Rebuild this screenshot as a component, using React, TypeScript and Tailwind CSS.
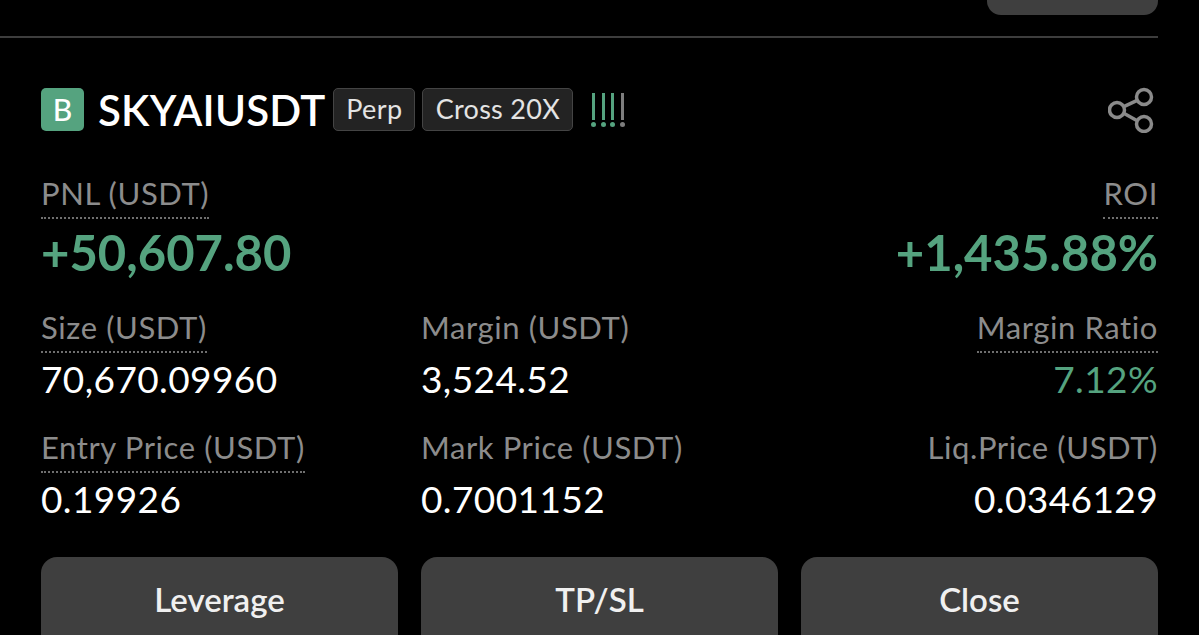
const GREEN = 'text-[#55a37f]';

type Field = { label: string; value: string; dotted?: boolean; valueClass?: string };

const rows: Field[][] = [
  [
    { label: 'Size (USDT)', value: '70,670.09960', dotted: true },
    { label: 'Margin (USDT)', value: '3,524.52' },
    { label: 'Margin Ratio', value: '7.12%', dotted: true, valueClass: GREEN },
  ],
  [
    { label: 'Entry Price (USDT)', value: '0.19926', dotted: true },
    { label: 'Mark Price (USDT)', value: '0.7001152' },
    { label: 'Liq.Price (USDT)', value: '0.0346129' },
  ],
];

function Label({ text, dotted }: { text: string; dotted?: boolean }) {
  return (
    <span
      className={`inline-block h-[47px] pt-[4px] text-[31px] leading-[34px] tracking-[0.6px] text-[#8c8c8c] ${
        dotted ? 'border-b-2 border-dotted border-[#6f6f6f]' : ''
      }`}
    >
      {text}
    </span>
  );
}

function ShareIcon() {
  return (
    <svg width="46" height="46" viewBox="0 0 46 46" fill="none" stroke="#8a8a8a" strokeWidth="3.5">
      <circle cx="36" cy="10" r="7.5" />
      <circle cx="9" cy="23" r="7.5" />
      <circle cx="36" cy="37" r="7.5" />
      <path d="M15.8 19.7 29.2 13.3M15.8 26.3 29.2 33.7" />
    </svg>
  );
}

function RiskBars() {
  return (
    <div className="ml-[18px] flex gap-[4.5px]">
      {['#55a37f', '#55a37f', '#55a37f', '#7d7d7d'].map((c, i) => (
        <div key={i} className="flex w-[5px] flex-col items-center gap-[2px]">
          <div className="h-[27px] w-[3px]" style={{ backgroundColor: c }} />
          <div className="h-[5px] w-[5px] rounded-full" style={{ backgroundColor: c }} />
        </div>
      ))}
    </div>
  );
}

export default function App() {
  return (
    <div className="h-[635px] w-[1199px] overflow-hidden bg-black pr-[41px] font-['Lato','Liberation_Sans',sans-serif] text-white">
      <div className="flex h-[38px] justify-end border-b-2 border-[#3d3d3d]">
        <div className="h-[15px] w-[171px] rounded-b-[14px] bg-[#3f3f3f]" />
      </div>

      <div className="pl-[41px]">
        <div className="mt-[50px] flex h-[43px] items-center">
          <div className="flex h-[43px] w-[43px] items-center justify-center rounded-[5px] bg-[#55a37f] text-[30px] font-medium">B</div>
          <div className="ml-[14px] pt-[2px] text-[42px] font-semibold tracking-[0.2px]">SKYAIUSDT</div>
          <span className="ml-[8px] flex h-[43px] w-[82px] items-center justify-center rounded-[5px] border border-[#444] bg-[#232323] text-[27px] tracking-[0.4px] text-[#e4e4e4]">Perp</span>
          <span className="ml-[7px] flex h-[43px] w-[151px] items-center justify-center rounded-[5px] border border-[#444] bg-[#232323] text-[27px] tracking-[0.3px] text-[#e4e4e4]">Cross 20X</span>
          <RiskBars />
          <div className="ml-auto mr-[4px]"><ShareIcon /></div>
        </div>

        <div className="mt-[41px] flex justify-between">
          <div>
            <Label text="PNL (USDT)" dotted />
            <div className={`mt-[6px] text-[49px] font-bold leading-[54px] ${GREEN}`}>+50,607.80</div>
          </div>
          <div className="flex flex-col items-end">
            <Label text="ROI" dotted />
            <div className={`mt-[6px] text-[49px] font-bold leading-[54px] ${GREEN}`}>+1,435.88%</div>
          </div>
        </div>

        <div className="mt-[27px] flex flex-col gap-[26px]">
          {rows.map((row, r) => (
            <div key={r} className="grid grid-cols-3 gap-x-[23px]">
              {row.map((f, i) => (
                <div key={f.label} className={i === 2 ? 'flex flex-col items-end' : 'flex flex-col items-start'}>
                  <Label text={f.label} dotted={f.dotted} />
                  <div className={`mt-[5px] text-[37px] leading-[42px] tracking-[0.4px] ${f.valueClass ?? 'text-white'}`}>{f.value}</div>
                </div>
              ))}
            </div>
          ))}
        </div>

        <div className="mt-[37px] grid grid-cols-3 gap-x-[23px]">
          {['Leverage', 'TP/SL', 'Close'].map((b) => (
            <button key={b} className="h-[88px] rounded-t-[16px] bg-[#3f3f3f] pb-[3px] text-[33px] font-semibold leading-[85px] text-[#f0f0f0]">
              {b}
            </button>
          ))}
        </div>
      </div>
    </div>
  );
}
